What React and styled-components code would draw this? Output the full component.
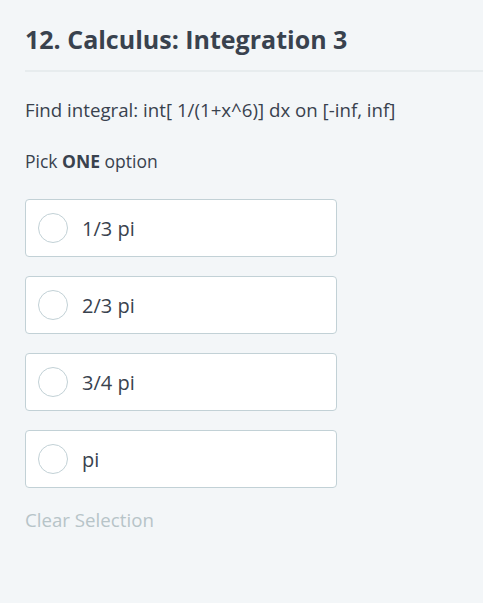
import React from 'react';
import styled, { createGlobalStyle } from 'styled-components';

const GlobalStyle = createGlobalStyle`
  html, body {
    margin: 0;
    background: #f3f6f8;
    font-family: "Open Sans", "Noto Sans", sans-serif;
  }
`;

const Main = styled.main`
  min-height: 603px;
  padding: 22px 0 0 25px;
  box-sizing: border-box;
`;

const Title = styled.h1`
  margin: 0;
  padding-bottom: 14px;
  font-size: 25px;
  line-height: 34px;
  font-weight: 700;
  color: #39424e;
  border-bottom: 2px solid #e7ecee;
`;

const Question = styled.p`
  margin: 26px 0 0;
  font-size: 18.7px;
  line-height: 24px;
  color: #39424e;
`;

const Hint = styled.p`
  margin: 27px 0 0;
  font-size: 17.5px;
  line-height: 24px;
  color: #39424e;

  & > b {
    font-weight: 700;
  }
`;

const Options = styled.div`
  margin-top: 26px;
  display: flex;
  flex-direction: column;
  gap: 19px;
`;

const Option = styled.label`
  width: 312px;
  height: 58px;
  box-sizing: border-box;
  display: flex;
  align-items: center;
  gap: 14px;
  padding: 0 12px;
  background: #fff;
  border: 1px solid #c2d1d6;
  border-radius: 4px;
  cursor: pointer;
`;

const Radio = styled.span`
  width: 30px;
  height: 30px;
  box-sizing: border-box;
  border: 1px solid #c2d1d6;
  border-radius: 50%;
  background: #fff;
  flex-shrink: 0;
`;

const OptionText = styled.span`
  font-size: 20px;
  color: #39424e;
`;

const Clear = styled.button`
  margin-top: 20px;
  padding: 0;
  border: none;
  background: none;
  font-family: inherit;
  font-size: 18.7px;
  line-height: 24px;
  color: #b7c4c8;
`;

const options = ['1/3 pi', '2/3 pi', '3/4 pi', 'pi'];

const App = () => (
  <Main>
    <GlobalStyle />
    <Title>12. Calculus: Integration 3</Title>
    <Question>Find integral: int[ 1/(1+x^6)] dx on [-inf, inf]</Question>
    <Hint>
      Pick <b>ONE</b> option
    </Hint>
    <Options>
      {options.map((o) => (
        <Option key={o}>
          <Radio />
          <OptionText>{o}</OptionText>
        </Option>
      ))}
    </Options>
    <Clear>Clear Selection</Clear>
  </Main>
);

export default App;
